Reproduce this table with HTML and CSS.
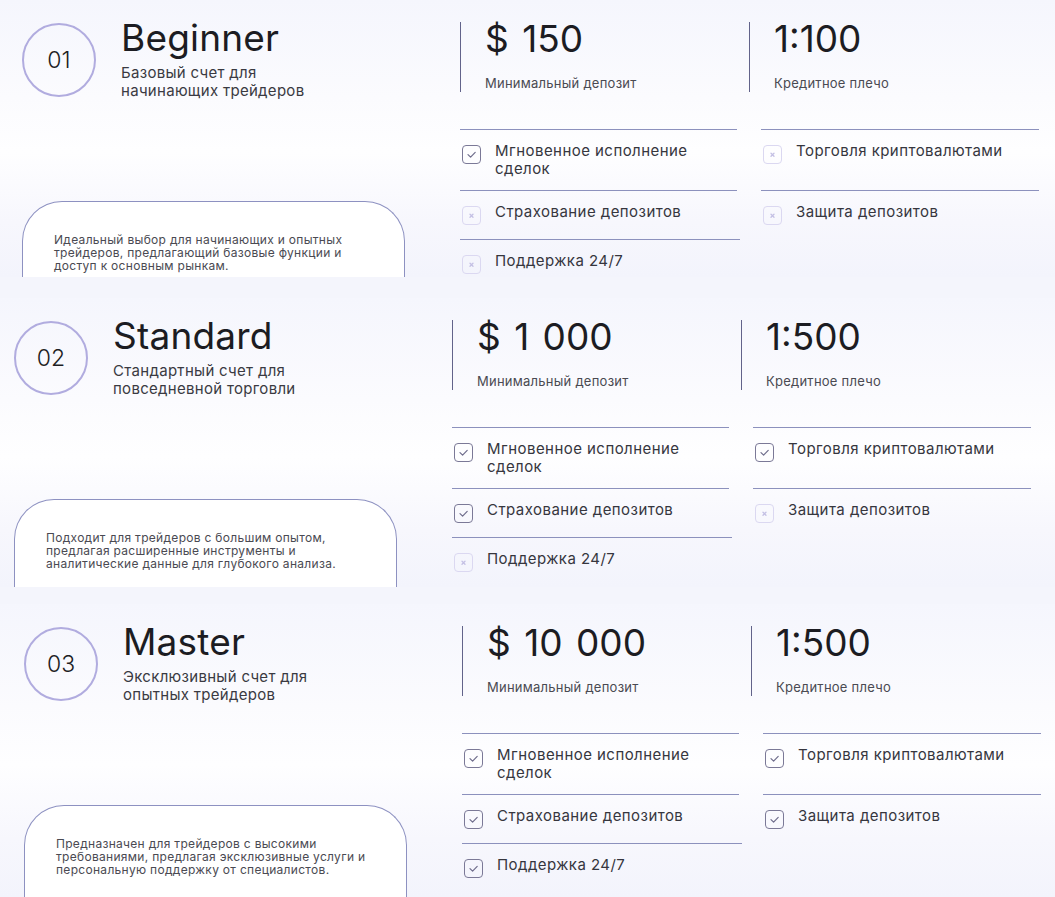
FILE: index.html
```html
<!DOCTYPE html>
<html lang="ru">
<head>
<meta charset="utf-8">
<title>Счета</title>
<link rel="stylesheet" href="styles.css">
</head>
<body>
<main class="stack">
  <section class="card card--first">
    <div class="left">
      <div class="head">
        <div class="num">01</div>
        <div class="titles">
          <h2 class="title">Beginner</h2>
          <p class="subtitle">Базовый счет для<br>начинающих трейдеров</p>
        </div>
      </div>
      <div class="desc">Идеальный выбор для начинающих и опытных трейдеров, предлагающий базовые функции и доступ к основным рынкам.</div>
    </div>
    <div class="right">
      <div class="stats">
        <div class="stat stat--first"><div class="value">$ 150</div><div class="label">Минимальный депозит</div></div>
        <div class="stat"><div class="value">1:100</div><div class="label">Кредитное плечо</div></div>
      </div>
      <ul class="features">
        <li class="feat"><span class="cb cb--on"><svg viewBox="0 0 19 19"><path d="M6 9.6l2.6 2.6L13.2 7.4"/></svg></span><span class="ftext">Мгновенное исполнение сделок</span></li>
        <li class="feat"><span class="cb cb--off"><svg viewBox="0 0 19 19"><path d="M8 8.2l3 3M11 8.2l-3 3"/></svg></span><span class="ftext">Торговля криптовалютами</span></li>
        <li class="feat"><span class="cb cb--off"><svg viewBox="0 0 19 19"><path d="M8 8.2l3 3M11 8.2l-3 3"/></svg></span><span class="ftext">Страхование депозитов</span></li>
        <li class="feat"><span class="cb cb--off"><svg viewBox="0 0 19 19"><path d="M8 8.2l3 3M11 8.2l-3 3"/></svg></span><span class="ftext">Защита депозитов</span></li>
        <li class="feat feat--last"><span class="cb cb--off"><svg viewBox="0 0 19 19"><path d="M8 8.2l3 3M11 8.2l-3 3"/></svg></span><span class="ftext">Поддержка 24/7</span></li>
      </ul>
    </div>
  </section>

  <section class="card card--second">
    <div class="left">
      <div class="head">
        <div class="num">02</div>
        <div class="titles">
          <h2 class="title">Standard</h2>
          <p class="subtitle">Стандартный счет для<br>повседневной торговли</p>
        </div>
      </div>
      <div class="desc">Подходит для трейдеров с большим опытом, предлагая расширенные инструменты и аналитические данные для глубокого анализа.</div>
    </div>
    <div class="right">
      <div class="stats">
        <div class="stat stat--first"><div class="value">$ 1 000</div><div class="label">Минимальный депозит</div></div>
        <div class="stat"><div class="value">1:500</div><div class="label">Кредитное плечо</div></div>
      </div>
      <ul class="features">
        <li class="feat"><span class="cb cb--on"><svg viewBox="0 0 19 19"><path d="M6 9.6l2.6 2.6L13.2 7.4"/></svg></span><span class="ftext">Мгновенное исполнение сделок</span></li>
        <li class="feat"><span class="cb cb--on"><svg viewBox="0 0 19 19"><path d="M6 9.6l2.6 2.6L13.2 7.4"/></svg></span><span class="ftext">Торговля криптовалютами</span></li>
        <li class="feat"><span class="cb cb--on"><svg viewBox="0 0 19 19"><path d="M6 9.6l2.6 2.6L13.2 7.4"/></svg></span><span class="ftext">Страхование депозитов</span></li>
        <li class="feat"><span class="cb cb--off"><svg viewBox="0 0 19 19"><path d="M8 8.2l3 3M11 8.2l-3 3"/></svg></span><span class="ftext">Защита депозитов</span></li>
        <li class="feat feat--last"><span class="cb cb--off"><svg viewBox="0 0 19 19"><path d="M8 8.2l3 3M11 8.2l-3 3"/></svg></span><span class="ftext">Поддержка 24/7</span></li>
      </ul>
    </div>
  </section>

  <section class="card card--third">
    <div class="left">
      <div class="head">
        <div class="num">03</div>
        <div class="titles">
          <h2 class="title">Master</h2>
          <p class="subtitle">Эксклюзивный счет для<br>опытных трейдеров</p>
        </div>
      </div>
      <div class="desc">Предназначен для трейдеров с высокими требованиями, предлагая эксклюзивные услуги и персональную поддержку от специалистов.</div>
    </div>
    <div class="right">
      <div class="stats">
        <div class="stat stat--first"><div class="value">$ 10 000</div><div class="label">Минимальный депозит</div></div>
        <div class="stat"><div class="value">1:500</div><div class="label">Кредитное плечо</div></div>
      </div>
      <ul class="features">
        <li class="feat"><span class="cb cb--on"><svg viewBox="0 0 19 19"><path d="M6 9.6l2.6 2.6L13.2 7.4"/></svg></span><span class="ftext">Мгновенное исполнение сделок</span></li>
        <li class="feat"><span class="cb cb--on"><svg viewBox="0 0 19 19"><path d="M6 9.6l2.6 2.6L13.2 7.4"/></svg></span><span class="ftext">Торговля криптовалютами</span></li>
        <li class="feat"><span class="cb cb--on"><svg viewBox="0 0 19 19"><path d="M6 9.6l2.6 2.6L13.2 7.4"/></svg></span><span class="ftext">Страхование депозитов</span></li>
        <li class="feat"><span class="cb cb--on"><svg viewBox="0 0 19 19"><path d="M6 9.6l2.6 2.6L13.2 7.4"/></svg></span><span class="ftext">Защита депозитов</span></li>
        <li class="feat feat--last"><span class="cb cb--on"><svg viewBox="0 0 19 19"><path d="M6 9.6l2.6 2.6L13.2 7.4"/></svg></span><span class="ftext">Поддержка 24/7</span></li>
      </ul>
    </div>
  </section>
</main>
</body>
</html>
```

FILE: styles.css
```css
* { box-sizing: border-box; }

html, body {
  margin: 0;
  padding: 0;
}

body {
  background: #f4f5fc;
  font-family: Inter, "Noto Sans", "Liberation Sans", sans-serif;
  color: #1e1e24;
  overflow: hidden;
  height: 897px;
}

.stack {
  display: flex;
  flex-direction: column;
}

.card {
  display: flex;
  overflow: hidden;
  padding-top: 23px;
  background: linear-gradient(180deg, #f5f6fd 0%, #fbfbfe 35%, #fefeff 55%, #f7f7fd 80%, #f3f4fc 100%);
}

.card--first {
  height: 277px;
  padding-left: 22px;
}

.card--second {
  height: 289px;
  margin-top: 21px;
  padding-left: 14px;
}

.card--third {
  height: 293px;
  margin-top: 17px;
  padding-left: 24px;
}

.left {
  width: 383px;
  flex-shrink: 0;
  display: flex;
  flex-direction: column;
}

.head {
  display: flex;
  align-items: flex-start;
}

.num {
  width: 74px;
  height: 74px;
  flex-shrink: 0;
  border: 2px solid #b1acdf;
  border-radius: 50%;
  display: flex;
  align-items: center;
  justify-content: center;
  font-size: 23px;
  font-weight: 300;
  color: #1e1e24;
}

.titles {
  margin-left: 25px;
  margin-top: -7px;
}

.title {
  margin: 0;
  font-size: 37px;
  line-height: 44px;
  font-weight: 400;
  letter-spacing: 0.2px;
  color: #1c1c22;
}

.subtitle {
  margin: 4px 0 0;
  font-size: 15px;
  line-height: 18px;
  letter-spacing: 0.3px;
  color: #3a3a42;
}

.desc {
  margin-top: 101px;
  height: 150px;
  flex-shrink: 0;
  border: 1px solid #8d91c1;
  border-bottom: none;
  border-radius: 40px 40px 0 0;
  background: #ffffff;
  padding: 31px 30px 0 31px;
  font-size: 12px;
  line-height: 13px;
  letter-spacing: 0.3px;
  color: #4a4a52;
}

.right {
  margin-left: 55px;
  width: 580px;
  flex-shrink: 0;
}

.stats {
  display: flex;
  margin-top: -1px;
}

.stat {
  height: 70px;
  border-left: 1px solid #62638a;
  padding-left: 24px;
  display: flex;
  flex-direction: column;
  justify-content: space-between;
}

.stat--first {
  width: 289px;
}

.value {
  font-size: 37px;
  line-height: 33px;
  font-weight: 400;
  word-spacing: 3px;
  color: #1c1c22;
}

.label {
  font-size: 13px;
  line-height: 16px;
  letter-spacing: 0.25px;
  color: #4a4a52;
  margin-bottom: 1px;
}

.features {
  list-style: none;
  margin: 37px 0 0;
  padding: 0;
  display: grid;
  grid-template-columns: 277px 278px;
  column-gap: 24px;
  align-items: stretch;
}

.feat {
  display: flex;
  align-items: flex-start;
  border-top: 1px solid #8c91bd;
  padding: 12px 0;
}

.feat--last {
  margin-right: -3px;
}

.cb {
  width: 19px;
  height: 19px;
  flex-shrink: 0;
  margin: 3px 0 2px 2px;
  border-radius: 4px;
  display: flex;
}

.cb svg {
  width: 19px;
  height: 19px;
  margin: -1.5px;
  fill: none;
  stroke-linecap: round;
  stroke-linejoin: round;
}

.cb--on {
  border: 1.5px solid #7b7997;
}

.cb--on svg {
  stroke: #6f6d8c;
  stroke-width: 1.2;
}

.cb--off {
  border: 1.5px solid #dbd8f1;
}

.cb--off svg {
  stroke: #c4c0e4;
  stroke-width: 1.3;
}

.ftext {
  margin-left: 14px;
  font-size: 15px;
  line-height: 18px;
  letter-spacing: 0.45px;
  color: #36363e;
  max-width: 220px;
}
```
